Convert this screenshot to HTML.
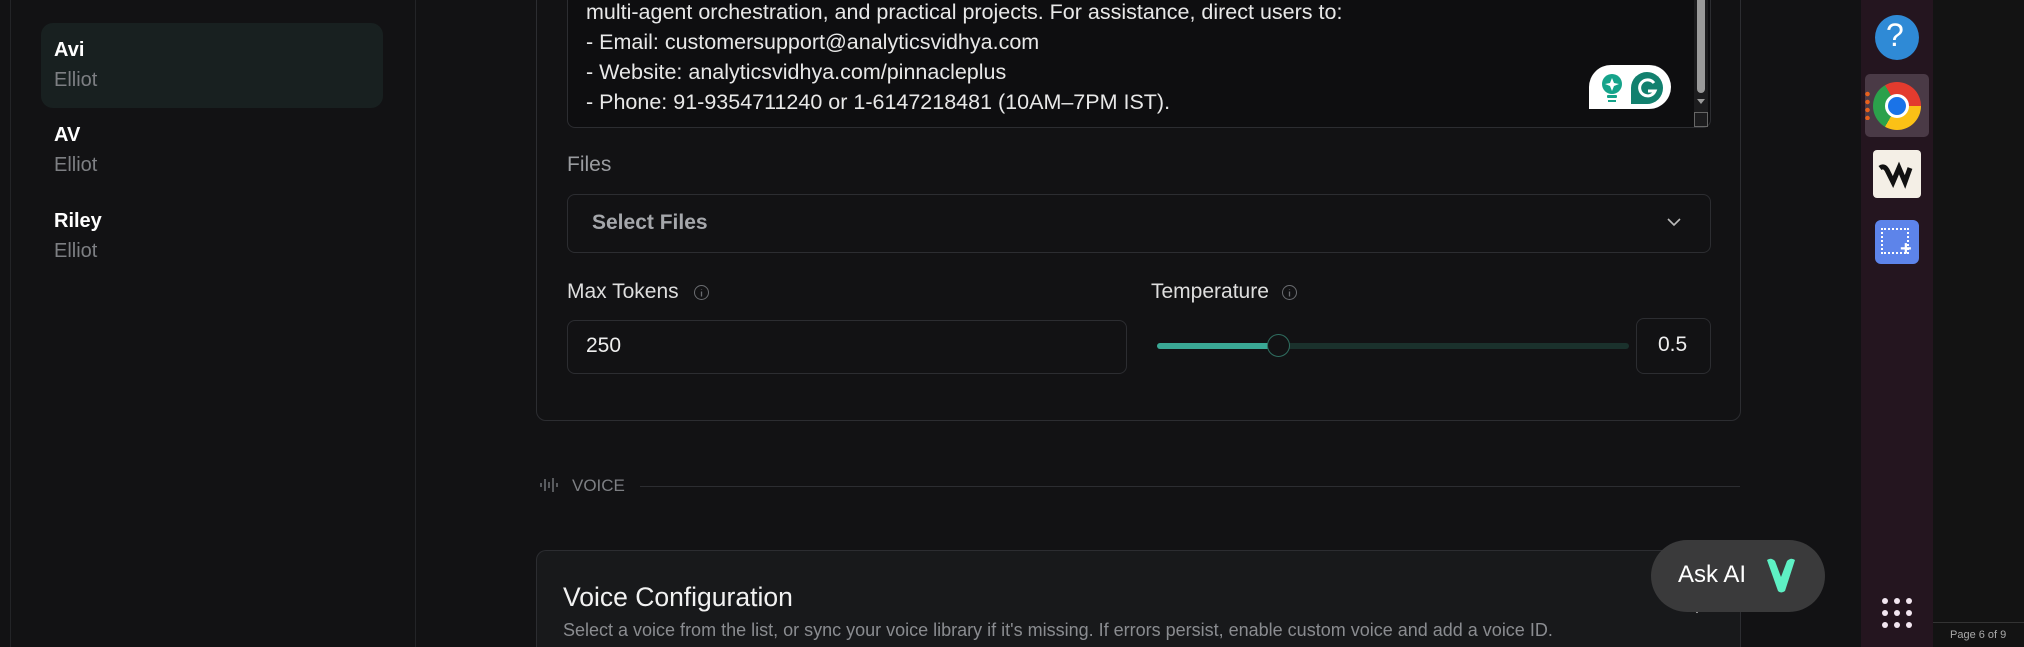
<!DOCTYPE html>
<html><head><meta charset="utf-8"><style>
*{margin:0;padding:0;box-sizing:border-box}
html,body{width:2024px;height:647px;overflow:hidden}
body{background:#121214;position:relative;font-family:"Liberation Sans",sans-serif;color:#e6e6e6}
.a{position:absolute}
.t{position:absolute;white-space:nowrap}
.d{position:absolute;width:6px;height:6px;border-radius:50%;background:#f2e6f0}
</style></head><body>
<div class="a" style="left:10px;top:0;width:1px;height:647px;background:#232427"></div>
<div class="a" style="left:415px;top:0;width:1px;height:647px;background:#232427"></div>
<div class="a" style="left:41px;top:23px;width:342px;height:85px;border-radius:12px;background:#182020"></div>
<div class="t" style="left:54px;top:39px;font-size:20px;font-weight:bold;color:#fff">Avi</div>
<div class="t" style="left:54px;top:69px;font-size:20px;color:#7d7f83">Elliot</div>
<div class="t" style="left:54px;top:124px;font-size:20px;font-weight:bold;color:#fff">AV</div>
<div class="t" style="left:54px;top:154px;font-size:20px;color:#7d7f83">Elliot</div>
<div class="t" style="left:54px;top:210px;font-size:20px;font-weight:bold;color:#fff">Riley</div>
<div class="t" style="left:54px;top:240px;font-size:20px;color:#7d7f83">Elliot</div>

<div class="a" style="left:536px;top:-20px;width:1205px;height:441px;border:1px solid #2c2d31;border-radius:10px"></div>
<div class="a" style="left:567px;top:-20px;width:1144px;height:148px;border:1px solid #2c2d31;border-radius:8px;background:#0e0e10"></div>
<div class="t" style="left:586px;top:-3px;font-size:21.5px;line-height:30px;color:#e8e8e8">multi-agent orchestration, and practical projects. For assistance, direct users to:<br>- Email: customersupport@analyticsvidhya.com<br>- Website: analyticsvidhya.com/pinnacleplus<br>- Phone: 91-9354711240 or 1-6147218481 (10AM–7PM IST).</div>
<div class="a" style="left:1694px;top:0;width:14px;height:127px;background:#1c1c1e"></div>
<div class="a" style="left:1697px;top:0;width:8px;height:93px;background:#9a9a9a;border-radius:0 0 4px 4px"></div>
<div class="a" style="left:1697px;top:99px;width:0;height:0;border-left:4px solid transparent;border-right:4px solid transparent;border-top:5px solid #9a9a9a"></div>
<div class="a" style="left:1694px;top:112px;width:14px;height:15px;border:1px solid #666"></div>
<div class="a" style="left:1589px;top:65px;width:82px;height:44px;background:#fff;border-radius:22px 22px 22px 0"></div>
<svg class="a" style="left:1598px;top:72px" width="66" height="32" viewBox="0 0 66 32"><circle cx="14" cy="12" r="10" fill="#15a38a"/><path d="M14 6l2 5 5 1-5 2-2 5-2-5-5-2 5-1z" fill="#fff"/><rect x="9" y="23" width="10" height="3" rx="1" fill="#15a38a"/><rect x="10" y="28" width="8" height="2" fill="#15a38a"/><path d="M33 16a16 16 0 1 1 16 16h-16z" fill="#12806e"/><path d="M56 11a8 8 0 1 0 1 8h-7" stroke="#fff" stroke-width="3" fill="none"/></svg>

<div class="t" style="left:567px;top:153px;font-size:21px;color:#9a9ca0">Files</div>
<div class="a" style="left:567px;top:194px;width:1144px;height:59px;border:1px solid #2c2d31;border-radius:8px"></div>
<div class="t" style="left:592px;top:211px;font-size:21px;font-weight:bold;color:#a5a7ab">Select Files</div>
<svg class="a" style="left:1666px;top:216px" width="16" height="12"><path d="M2 3l6 6 6-6" stroke="#bbb" stroke-width="1.6" fill="none"/></svg>

<div class="t" style="left:567px;top:280px;font-size:21px;color:#dedede">Max Tokens</div>
<svg class="a" style="left:693px;top:284px" width="17" height="17"><circle cx="8.5" cy="8.5" r="7" stroke="#6a6c70" fill="none"/><path d="M8.5 7.5v5M8.5 5v.5" stroke="#6a6c70" stroke-width="1.3"/></svg>
<div class="a" style="left:567px;top:320px;width:560px;height:54px;border:1px solid #2c2d31;border-radius:8px"></div>
<div class="t" style="left:586px;top:334px;font-size:21px;color:#eee">250</div>
<div class="t" style="left:1151px;top:280px;font-size:21px;color:#dedede">Temperature</div>
<svg class="a" style="left:1281px;top:284px" width="17" height="17"><circle cx="8.5" cy="8.5" r="7" stroke="#6a6c70" fill="none"/><path d="M8.5 7.5v5M8.5 5v.5" stroke="#6a6c70" stroke-width="1.3"/></svg>
<div class="a" style="left:1157px;top:343px;width:472px;height:6px;border-radius:3px;background:#1a312c"></div>
<div class="a" style="left:1157px;top:343px;width:121px;height:6px;border-radius:3px;background:#3aa895"></div>
<div class="a" style="left:1267px;top:334px;width:23px;height:23px;border-radius:50%;background:#121214;border:1.5px solid #2f6e60"></div>
<div class="a" style="left:1636px;top:318px;width:75px;height:56px;border:1px solid #2c2d31;border-radius:8px"></div>
<div class="t" style="left:1658px;top:333px;font-size:21px;color:#eee">0.5</div>

<svg class="a" style="left:539px;top:475px" width="20" height="20"><path d="M2 8v4M6 4v12M10 7v6M14 3v14M18 8v4" stroke="#77797d" stroke-width="1.4"/></svg>
<div class="t" style="left:572px;top:476px;font-size:17px;color:#7d7f83">VOICE</div>
<div class="a" style="left:640px;top:486px;width:1100px;height:1px;background:#2c2d31"></div>

<div class="a" style="left:536px;top:550px;width:1205px;height:97px;border:1px solid #2c2d31;border-bottom:none;border-radius:10px 10px 0 0;background:#18191b"></div>
<div class="t" style="left:563px;top:582px;font-size:26.5px;color:#f2f2f2">Voice Configuration</div>
<div class="t" style="left:563px;top:620px;font-size:18px;color:#8a8c90">Select a voice from the list, or sync your voice library if it's missing. If errors persist, enable custom voice and add a voice ID.</div>
<svg class="a" style="left:1690px;top:605px" width="14" height="10"><path d="M2 2l5 5 5-5" stroke="#ddd" stroke-width="1.6" fill="none"/></svg>

<div class="a" style="left:1651px;top:540px;width:174px;height:72px;border-radius:36px;background:#3a3a3b"></div>
<div class="t" style="left:1678px;top:561px;font-size:24px;color:#fff">Ask AI</div>
<svg class="a" style="left:1764px;top:556px" width="34" height="40"><path d="M3 4q4-3 8 1l6 16 6-16q4-4 8-1l-10 31q-4 3-7 0z" fill="#5ef0c4"/></svg>

<div class="a" style="left:1861px;top:0;width:72px;height:647px;background:#24151f"></div>
<div class="a" style="left:1933px;top:0;width:91px;height:647px;background:#131313"></div>
<div class="a" style="left:1933px;top:622px;width:91px;height:1px;background:#333"></div>
<div class="t" style="left:1950px;top:629px;font-size:11px;color:#aaa">Page 6 of 9</div>
<div class="a" style="left:1875px;top:15px;width:44px;height:45px;border-radius:50%;background:#2f8ad6"></div>
<div class="t" style="left:1886px;top:17px;font-size:32px;color:#fff">?</div>
<div class="a" style="left:1865px;top:74px;width:64px;height:63px;border-radius:5px;background:#4a3a46"></div>
<div class="a" style="left:1865px;top:90px;width:5px;height:30px;background:radial-gradient(circle,#e8601c 2px,transparent 2.5px) 0 0/5px 8px"></div>
<div class="a" style="left:1873px;top:82px;width:48px;height:48px;border-radius:50%;background:conic-gradient(from -30deg,#e33b2e 0 120deg,#fbc116 120deg 240deg,#2ba14b 240deg 360deg)"></div>
<div class="a" style="left:1885px;top:94px;width:24px;height:24px;border-radius:50%;background:#1a73e8;border:3px solid #fff"></div>
<div class="a" style="left:1873px;top:150px;width:48px;height:48px;border-radius:4px;background:#f4efe6"></div>
<svg class="a" style="left:1877px;top:158px" width="40" height="32"><path d="M3 10q4-3 7 2l6 12 6-14 6 14 5-14" stroke="#111" stroke-width="5" fill="none"/></svg>
<div class="a" style="left:1875px;top:220px;width:44px;height:44px;border-radius:6px;background:#5d84ea"></div>
<div class="a" style="left:1881px;top:228px;width:28px;height:26px;border:2px dotted #fff"></div>
<div class="t" style="left:1900px;top:238px;font-size:20px;color:#fff;font-weight:bold">+</div>
<div class="d" style="left:1882px;top:598px"></div><div class="d" style="left:1894px;top:598px"></div><div class="d" style="left:1906px;top:598px"></div>
<div class="d" style="left:1882px;top:610px"></div><div class="d" style="left:1894px;top:610px"></div><div class="d" style="left:1906px;top:610px"></div>
<div class="d" style="left:1882px;top:622px"></div><div class="d" style="left:1894px;top:622px"></div><div class="d" style="left:1906px;top:622px"></div>
</body></html>
